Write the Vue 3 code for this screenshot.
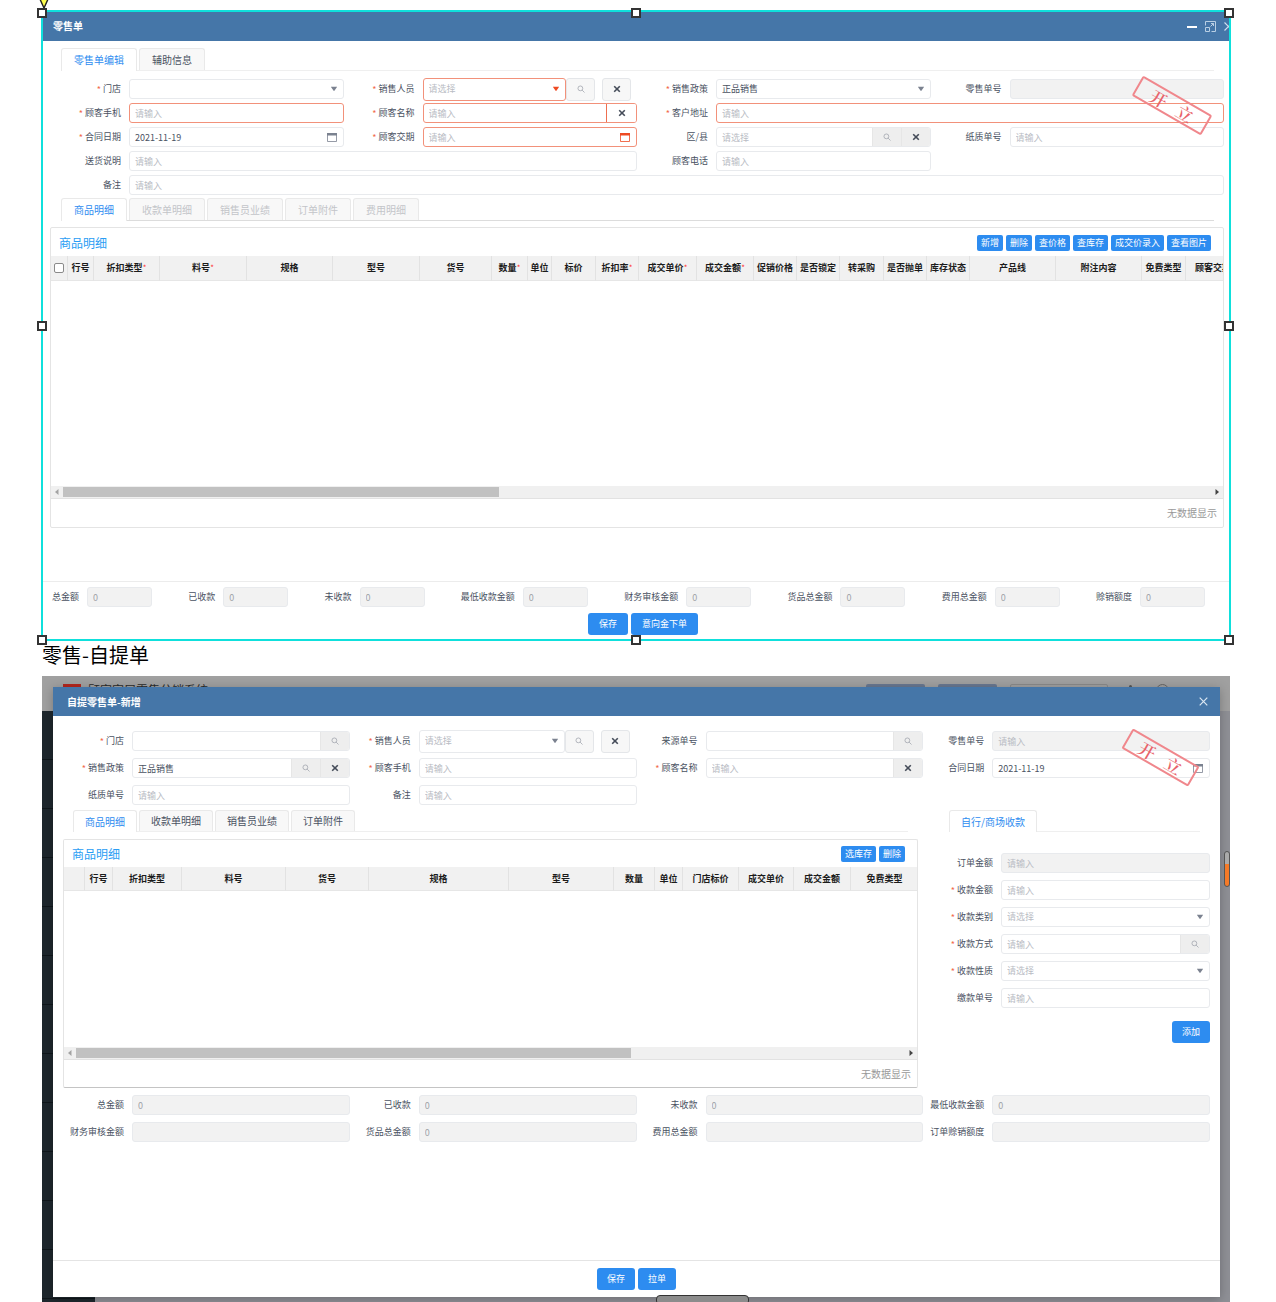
<script setup>
import { h } from 'vue'

const svg = (cls, box, kids) =>
  h('svg', { class: ['ico', cls], viewBox: box, 'aria-hidden': 'true' }, kids)

const icons = {
  search: () => svg('ico-search', '0 0 10 10', [
    h('circle', { cx: 4.2, cy: 4.2, r: 3, fill: 'none', stroke: 'currentColor' }),
    h('path', { d: 'M6.4 6.4 9.4 9.4', fill: 'none', stroke: 'currentColor' }),
  ]),
  clear: () => svg('ico-clear', '0 0 8 8', [
    h('path', { d: 'M1.2 1.2 6.8 6.8M6.8 1.2 1.2 6.8', fill: 'none', stroke: 'currentColor', 'stroke-width': 1.6 }),
  ]),
  caret: () => svg('ico-caret', '0 0 8 6', [
    h('path', { d: 'M0.8 0.8H7.2L4 5.2Z', fill: 'currentColor' }),
  ]),
  date: () => svg('ico-date', '0 0 10 9', [
    h('path', { d: 'M0.5 0.5H9.5V8.5H0.5Z', fill: 'none', stroke: 'currentColor', 'stroke-width': 0.8 }),
    h('path', { d: 'M0 0H10V2.4H0Z', fill: 'currentColor' }),
  ]),
}

const names = { search: '查找', clear: '清除' }
const iconButton = (kind, cls) =>
  h('button', { type: 'button', class: cls, 'aria-label': names[kind] }, [icons[kind]()])

const Field = (p) => {
  const f = p.f
  const control = f.kind === 'select'
    ? h('select', { id: f.id, class: { hint: !f.value } }, [h('option', f.value || f.hint || '')])
    : h('input', { id: f.id, type: 'text', placeholder: f.hint, value: f.value, disabled: f.off })
  const tail = f.kind === 'select' ? icons.caret() : f.kind === 'date' ? icons.date() : null
  const box = h('div', { class: ['box', { err: f.err, off: f.off }] }, [
    control,
    tail,
    ...(f.addons || []).map((k) => iconButton(k, ['addon', { plain: f.err }])),
  ])
  return h('div', { class: ['field', f.span && 'span' + f.span] }, [
    h('label', { for: f.id }, [f.req ? h('span', { class: 'star' }, '*') : null, f.label]),
    f.side ? h('div', { class: 'split' }, [box, iconButton('search', 'square'), iconButton('clear', 'square apart')]) : box,
  ])
}
Field.props = ['f']

const list = (prefix, rows) => rows.map((r, i) => ({ id: prefix + i, ...r }))
const IN = '请输入'
const SEL = '请选择'

const retail = list('retail', [
  { label: '门店', req: true, kind: 'select' },
  { label: '销售人员', req: true, kind: 'select', hint: SEL, err: true, side: true },
  { label: '销售政策', req: true, kind: 'select', value: '正品销售' },
  { label: '零售单号', off: true },
  { label: '顾客手机', req: true, hint: IN, err: true },
  { label: '顾客名称', req: true, hint: IN, err: true, addons: ['clear'] },
  { label: '客户地址', req: true, hint: IN, err: true, span: 2 },
  { label: '合同日期', req: true, kind: 'date', value: '2021-11-19' },
  { label: '顾客交期', req: true, kind: 'date', hint: IN, err: true },
  { label: '区/县', hint: SEL, addons: ['search', 'clear'] },
  { label: '纸质单号', hint: IN },
  { label: '送货说明', hint: IN, span: 2 },
  { label: '顾客电话', hint: IN },
  { label: '备注', hint: IN, span: 4 },
])

const pickup = list('pickup', [
  { label: '门店', req: true, addons: ['search'] },
  { label: '销售人员', req: true, kind: 'select', hint: SEL, side: true },
  { label: '来源单号', addons: ['search'] },
  { label: '零售单号', hint: IN, off: true },
  { label: '销售政策', req: true, value: '正品销售', addons: ['search', 'clear'] },
  { label: '顾客手机', req: true, hint: IN },
  { label: '顾客名称', req: true, hint: IN, addons: ['clear'] },
  { label: '合同日期', kind: 'date', value: '2021-11-19' },
  { label: '纸质单号', hint: IN },
  { label: '备注', hint: IN },
])

const payment = list('pay', [
  { label: '订单金额', hint: IN, off: true },
  { label: '收款金额', req: true, hint: IN },
  { label: '收款类别', req: true, kind: 'select', hint: SEL },
  { label: '收款方式', req: true, hint: IN, addons: ['search'] },
  { label: '收款性质', req: true, kind: 'select', hint: SEL },
  { label: '缴款单号', hint: IN },
])

const retailSums = list('rsum', ['总金额', '已收款', '未收款', '最低收款金额', '财务审核金额', '货品总金额', '费用总金额', '赊销额度']
  .map((label) => ({ label, value: '0', off: true })))

const pickupSums = list('psum', [
  ['总金额', '0'], ['已收款', '0'], ['未收款', '0'], ['最低收款金额', '0'],
  ['财务审核金额', ''], ['货品总金额', '0'], ['费用总金额', ''], ['订单赊销额度', ''],
].map(([label, value]) => ({ label, value, off: true })))

const retailCols = [
  ['行号', 26], ['折扣类型', 66, 1], ['料号', 87, 1], ['规格', 86], ['型号', 87], ['货号', 72],
  ['数量', 36, 1], ['单位', 24], ['标价', 44], ['折扣率', 43, 1], ['成交单价', 58, 1], ['成交金额', 57, 1],
  ['促销价格', 43], ['是否锁定', 43], ['转采购', 44], ['是否抛单', 43], ['库存状态', 43], ['产品线', 86],
  ['附注内容', 86], ['免费类型', 44], ['顾客交期', 54],
]
const retailWidth = retailCols.reduce((sum, c) => sum + c[1], 17)

const pickupCols = [
  ['', 21], ['行号', 28], ['折扣类型', 69], ['料号', 104], ['货号', 83], ['规格', 140], ['型号', 105],
  ['数量', 41], ['单位', 28], ['门店标价', 56], ['成交单价', 55], ['成交金额', 57], ['免费类型', 67],
]

const retailTools = ['新增', '删除', '查价格', '查库存', '成交价录入', '查看图片']
const handles = ['nw', 'n', 'ne', 'w', 'e', 'sw', 's', 'se']
</script>

<template>
  <main class="page">
    <section class="frame">
      <header class="bar">
        <h2>零售单</h2>
        <div class="window-tools">
          <button type="button" aria-label="最小化"><svg width="10" height="12" viewBox="0 0 10 12"><path d="M0 7H10" stroke="#fff" stroke-width="2" /></svg></button>
          <button type="button" aria-label="最大化"><svg width="11" height="11" viewBox="0 0 11 11" fill="none" stroke="#b9cfe4"><path d="M.5 4.5V.5H10.5V10.5H6.5M.5 6.5H4.5V10.5H.5ZM5.5 5.5 8.5 2.5M6 2.5H8.5V5" /></svg></button>
          <button type="button" class="cut" aria-label="关闭"><svg width="9" height="9" viewBox="0 0 9 9"><path d="M.5.5 8.5 8.5M8.5.5.5 8.5" stroke="#cfe0f0" stroke-width="1.2" /></svg></button>
        </div>
      </header>

      <div class="body">
        <nav class="tabs">
          <button type="button" class="tab on">零售单编辑</button>
          <button type="button" class="tab">辅助信息</button>
        </nav>
        <form class="form">
          <Field v-for="f in retail" :key="f.id" :f="f" />
        </form>
        <nav class="tabs second">
          <button type="button" class="tab on">商品明细</button>
          <button v-for="t in ['收款单明细', '销售员业绩', '订单附件', '费用明细']" :key="t" type="button" class="tab" disabled>{{ t }}</button>
        </nav>

        <section class="card">
          <div class="card-head">
            <h3>商品明细</h3>
            <div class="tools">
              <button v-for="t in retailTools" :key="t" type="button" class="mini">{{ t }}</button>
            </div>
          </div>
          <div class="grid">
            <table :style="{ width: retailWidth + 'px' }">
              <colgroup>
                <col style="width: 17px" />
                <col v-for="c in retailCols" :key="c[0]" :style="{ width: c[1] + 'px' }" />
              </colgroup>
              <thead>
                <tr>
                  <th><input type="checkbox" aria-label="全选" /></th>
                  <th v-for="c in retailCols" :key="c[0]">{{ c[0] }}<sup v-if="c[2]">*</sup></th>
                </tr>
              </thead>
            </table>
          </div>
          <div class="scroll">
            <svg width="4" height="6" viewBox="0 0 4 6"><path d="M3.5 0V6L0 3Z" fill="#a3a3a3" /></svg>
            <div class="track"><div class="thumb"></div></div>
            <svg width="4" height="6" viewBox="0 0 4 6"><path d="M.5 0V6L4 3Z" fill="#444" /></svg>
          </div>
          <div class="empty">无数据显示</div>
        </section>
      </div>

      <footer class="foot">
        <div class="sums">
          <Field v-for="f in retailSums" :key="f.id" :f="f" />
        </div>
        <div class="actions">
          <button type="button" class="primary">保存</button>
          <button type="button" class="primary">意向金下单</button>
        </div>
      </footer>

      <div class="stamp"><span>开</span><span>立</span></div>
      <svg class="anchor" width="14" height="10" viewBox="0 0 14 10"><path d="M2-3 7 8 12-3" fill="#ffff4d" stroke="#222" stroke-width="1.4" /></svg>
      <i v-for="k in handles" :key="k" class="handle" :class="k"></i>
    </section>

    <h1>零售-自提单</h1>

    <section class="shell">
      <div class="backdrop">
        <div class="top">
          <i class="logo"></i><span class="brand">顾家家居零售分销系统</span>
          <i class="chip"></i><i class="chip"></i><i class="find"></i><i class="bell"></i><i class="face"></i>
        </div>
        <div class="side"></div>
      </div>

      <div class="modal">
        <header class="bar">
          <h2>自提零售单-新增</h2>
          <button type="button" aria-label="关闭"><svg width="9" height="9" viewBox="0 0 9 9"><path d="M.7.7 8.3 8.3M8.3.7.7 8.3" stroke="#dbe7f2" stroke-width="1.2" /></svg></button>
        </header>
        <div class="modal-body">
          <form class="form">
            <Field v-for="f in pickup" :key="f.id" :f="f" />
          </form>
          <div class="columns">
            <div>
              <nav class="tabs">
                <button type="button" class="tab on">商品明细</button>
                <button v-for="t in ['收款单明细', '销售员业绩', '订单附件']" :key="t" type="button" class="tab">{{ t }}</button>
              </nav>
              <section class="card">
                <div class="card-head">
                  <h3>商品明细</h3>
                  <div class="tools">
                    <button type="button" class="mini">选库存</button>
                    <button type="button" class="mini">删除</button>
                  </div>
                </div>
                <div class="grid">
                  <table>
                    <colgroup>
                      <col v-for="c in pickupCols" :key="c[0]" :style="{ width: c[1] + 'px' }" />
                    </colgroup>
                    <thead>
                      <tr><th v-for="c in pickupCols" :key="c[0]">{{ c[0] }}</th></tr>
                    </thead>
                  </table>
                </div>
                <div class="scroll">
                  <svg width="4" height="6" viewBox="0 0 4 6"><path d="M3.5 0V6L0 3Z" fill="#a3a3a3" /></svg>
                  <div class="track"><div class="thumb wide"></div></div>
                  <svg width="4" height="6" viewBox="0 0 4 6"><path d="M.5 0V6L4 3Z" fill="#444" /></svg>
                </div>
                <div class="empty">无数据显示</div>
              </section>
            </div>
            <div class="pay">
              <nav class="tabs"><button type="button" class="tab on">自行/商场收款</button></nav>
              <form class="pay-form">
                <Field v-for="f in payment" :key="f.id" :f="f" />
                <button type="button" class="primary">添加</button>
              </form>
            </div>
          </div>
          <div class="form totals">
            <Field v-for="f in pickupSums" :key="f.id" :f="f" />
          </div>
        </div>
        <footer class="modal-foot">
          <button type="button" class="primary">保存</button>
          <button type="button" class="primary">拉单</button>
        </footer>
        <div class="stamp"><span>开</span><span>立</span></div>
      </div>

      <i class="meter"></i>
      <i class="dock"></i>
    </section>
  </main>
</template>

<style>
body {
  margin: 0;
  background: #fff;
}
</style>

<style scoped>
.page {
  box-sizing: border-box;
  padding: 10px 45px 0 41px;
  font: 9px/12px "Noto Sans CJK SC", "Noto Sans", sans-serif;
  color: #4a5262;
  overflow: hidden;
}
.page *,
.page :deep(*) {
  box-sizing: border-box;
}
:deep(button),
:deep(input),
:deep(select) {
  margin: 0;
  font: inherit;
}
h1, h2, h3 {
  margin: 0;
}
h1 {
  margin-left: 1px;
  font-size: 20px;
  line-height: 28px;
  font-weight: 400;
  color: #000;
}
.frame {
  position: relative;
  border: 2px solid #0fe0dc;
}
.bar {
  display: flex;
  align-items: center;
  justify-content: space-between;
  height: 29px;
  padding: 0 12px 0 10px;
  background: #4576a8;
  color: #fff;
}
.bar h2 {
  font-size: 10px;
  line-height: 14px;
  font-weight: 700;
}
.bar button {
  display: flex;
  padding: 0;
  border: 0;
  background: none;
}
.bar svg {
  flex: none;
}
.frame .bar {
  padding: 0 0 1px 10px;
}
.window-tools {
  display: flex;
  align-items: center;
  gap: 8px;
}
.window-tools .cut {
  width: 5px;
  overflow: hidden;
}
.body {
  padding: 7px 5px 53px 7px;
}

/* tabs */
.page .tabs {
  display: flex;
  gap: 2px;
  height: 23px;
  margin: 0 10px 0 11px;
  border-bottom: 1px solid #efefef;
}
.page .tab {
  height: 22px;
  padding: 0 11px;
  border: 1px solid #e9e9e9;
  border-bottom: 0;
  border-radius: 3px 3px 0 0;
  background: #f8f8f8;
  color: #4a5262;
  font-size: 10px;
  line-height: 20px;
  white-space: nowrap;
}
.frame .tabs .tab {
  padding: 0 12px;
}
.page .tab.on {
  height: 23px;
  background: #fff;
  color: #2d8cf0;
}
.page .tab:disabled {
  color: #c3c5c9;
}
.page .tabs.second {
  margin-top: 3px;
  border-bottom-color: #dcdcdc;
}
.page .tabs.second + .card {
  margin-top: 6px;
}

/* fields */
.form {
  display: grid;
  grid-template-columns: repeat(4, minmax(0, 1fr));
  grid-auto-rows: 20px;
  row-gap: 4px;
  margin-top: 8px;
}
.page :deep(.field) {
  display: flex;
  align-items: center;
  min-width: 0;
}
.page :deep(.field label) {
  flex: none;
  display: flex;
  justify-content: flex-end;
  width: 71px;
  margin-right: 8px;
  white-space: nowrap;
}
.page :deep(.star) {
  margin-right: 2px;
  padding-top: 2px;
  line-height: 10px;
  color: #f26a4b;
}
.page :deep(.span2) {
  grid-column: span 2;
}
.page :deep(.span4) {
  grid-column: span 4;
}
.page :deep(.box) {
  flex: 1;
  display: flex;
  align-items: center;
  min-width: 0;
  height: 20px;
  border: 1px solid #e8eaed;
  border-radius: 3px;
  background: #fff;
  overflow: hidden;
}
.page :deep(.box input),
.page :deep(.box select) {
  flex: 1;
  width: 0;
  min-width: 0;
  height: 18px;
  padding: 0 5px;
  border: 0;
  outline: 0;
  background: transparent;
  color: #4a5262;
  appearance: none;
  opacity: 1;
}
.page :deep(.box input::placeholder),
.page :deep(.box select.hint) {
  color: #b9bcc4;
  opacity: 1;
}
.page :deep(.box.off) {
  background: #f2f2f2;
}
.page :deep(.box.off input) {
  color: #a0a3a8;
}
.page :deep(.box.err) {
  border-color: #f2917a;
}
.page :deep(.ico) {
  flex: none;
  display: block;
  color: #7b8290;
}
.page :deep(.ico-caret) {
  width: 8px;
  height: 6px;
  margin-right: 5px;
}
.page :deep(.ico-date) {
  width: 10px;
  height: 9px;
  margin-right: 6px;
}
.page :deep(.err > .ico) {
  color: #ee4a22;
}
.page :deep(.ico-search) {
  width: 8px;
  height: 8px;
  color: #a2a6ae;
}
.page :deep(.ico-clear) {
  width: 8px;
  height: 8px;
  color: #444b58;
}
.page :deep(.addon),
.page :deep(.square) {
  flex: none;
  display: flex;
  align-items: center;
  justify-content: center;
  padding: 0;
  width: 29px;
}
.page :deep(.addon) {
  height: 20px;
  border: 0;
  border-left: 1px solid #e6e6e6;
  background: #eee;
}
.page :deep(.addon.plain) {
  width: 30px;
  border-left-color: #ee6f50;
  background: #fff;
}
.page :deep(.split) {
  flex: 1;
  display: flex;
  padding-right: 6px;
  min-width: 0;
}
.page :deep(.split .box),
.page :deep(.square) {
  height: 23px;
}
.page :deep(.square) {
  border: 1px solid #e4e6e9;
  border-radius: 3px;
  background: #f7f7f7;
}
.page :deep(.square.apart) {
  margin-left: 7px;
}

/* table card */
.card {
  border: 1px solid #e4e4e4;
  border-radius: 2px;
}
.card-head {
  display: flex;
  align-items: center;
  justify-content: space-between;
  height: 28px;
  padding: 1px 12px 0 8px;
}
.card-head h3 {
  font-size: 12px;
  line-height: 16px;
  font-weight: 400;
  color: #2a9df4;
}
.tools {
  display: flex;
  gap: 3px;
}
.page .mini,
.page .primary {
  border: 0;
  border-radius: 2px;
  background: #2d8cf0;
  color: #fff;
  white-space: nowrap;
}
.page .mini {
  height: 16px;
  padding: 0 4px;
}
.page .primary {
  height: 22px;
  padding: 0 11px;
  border-radius: 3px;
}
.grid {
  min-height: 230px;
  overflow: hidden;
}
table {
  table-layout: fixed;
  width: 100%;
  border-collapse: separate;
  border-spacing: 0;
}
th {
  height: 25px;
  padding: 0;
  border-right: 1px solid #e2e2e2;
  border-bottom: 1px solid #e6e6e6;
  background: #f1f1f1;
  color: #1c1c1c;
  font-weight: 700;
  white-space: nowrap;
}
th:last-child {
  border-right: 0;
}
.page th input {
  display: block;
  appearance: none;
  width: 10px;
  height: 10px;
  margin: 0 auto;
  border: 1px solid #8a8a8a;
  border-radius: 2px;
  background: #fff;
}
th sup {
  font-size: 8px;
  line-height: 0;
  font-weight: 400;
  vertical-align: baseline;
  color: #f33;
}
.scroll {
  display: flex;
  align-items: center;
  gap: 4px;
  height: 12px;
  padding: 0 4px;
  background: #f0f0f0;
}
.track {
  flex: 1;
}
.thumb {
  width: 38%;
  height: 10px;
  background: #c1c1c1;
}
.thumb.wide {
  width: 67%;
}
.empty {
  height: 29px;
  padding-right: 6px;
  border-top: 1px solid #e2e2e2;
  font-size: 10px;
  line-height: 28px;
  text-align: right;
  color: #999;
}

/* frame footer */
.foot {
  padding: 5px 24px 4px 9px;
  border-top: 1px solid #ececec;
}
.sums {
  display: flex;
  justify-content: space-between;
}
.sums :deep(.field label) {
  width: auto;
}
.sums :deep(.box) {
  flex: none;
  width: 65px;
}
.actions {
  display: flex;
  justify-content: center;
  gap: 3px;
  padding: 6px 0 0 29px;
}

/* overlays */
.stamp {
  position: absolute;
  top: 82px;
  right: 17px;
  display: flex;
  align-items: center;
  justify-content: center;
  gap: 13px;
  width: 80px;
  height: 23px;
  border: 2px solid #f0878c;
  border-radius: 2px;
  font: 600 17px/20px "Noto Serif CJK SC", "Noto Sans CJK SC", serif;
  color: #e8636b;
  transform: rotate(30deg);
}
.anchor {
  position: absolute;
  top: -12px;
  left: -6px;
}
.handle {
  position: absolute;
  width: 10px;
  height: 10px;
  border: 2px solid #333;
  background: #fff;
}
.nw, .n, .ne { top: -4px; }
.w, .e { top: 309px; }
.sw, .s, .se { bottom: -6px; }
.nw, .w, .sw { left: -6px; }
.n, .s { left: calc(50% - 5px); }
.ne, .e, .se { right: -5px; }

/* second screen */
.shell {
  position: relative;
  display: grid;
  margin: 7px 1px 0;
  background: #8f9096;
  overflow: hidden;
}
.backdrop,
.modal {
  grid-area: 1 / 1;
}
.backdrop {
  display: flex;
  flex-direction: column;
}
.top {
  display: flex;
  align-items: flex-start;
  height: 35px;
  padding: 8px 61px 0 21px;
  background: #a0a0a0;
}
.logo {
  width: 18px;
  height: 12px;
  background: #b3271e;
}
.brand {
  margin: -2px auto 0 7px;
  font-size: 12px;
  line-height: 16px;
  color: #2b2b2b;
}
.chip {
  width: 59px;
  height: 14px;
  margin-right: 13px;
  border-radius: 2px;
  background: #697891;
}
.find {
  width: 98px;
  height: 14px;
  border: 1px solid #8a8a8a;
  border-radius: 2px;
}
.bell {
  width: 3px;
  height: 3px;
  margin: 1px 24px 0 21px;
  border-radius: 2px;
  background: #555;
}
.face {
  width: 13px;
  height: 13px;
  border: 1px solid #666;
  border-radius: 50%;
}
.side {
  flex: 1;
  width: 53px;
  background: repeating-linear-gradient(#1e272d 0 48px, #10171b 48px 49px);
}
.modal {
  position: relative;
  margin: 11px 10px 5px 11px;
  background: #fff;
  box-shadow: 0 2px 10px rgba(0, 0, 0, 0.25);
}
.modal .bar {
  padding-left: 14px;
}
.modal-body {
  padding: 15px 10px 118px;
}
.modal .form {
  row-gap: 7px;
  margin: 0;
}
.modal .form :deep(.field label) {
  width: 61px;
}
.modal .form :deep(.split) {
  padding-right: 7px;
}
.columns {
  display: grid;
  grid-template-columns: minmax(0, 1fr) 261px;
  column-gap: 31px;
  margin-top: 5px;
}
.modal .tabs {
  height: 22px;
  margin: 0 10px;
}
.modal .tabs .tab {
  height: 21px;
}
.modal .tabs .tab.on {
  height: 22px;
}
.modal .card {
  margin-top: 7px;
  border-bottom-color: #c4c4c4;
}
.modal .card-head {
  height: 27px;
}
.modal .grid {
  min-height: 180px;
}
.modal th {
  height: 24px;
}
.modal .empty {
  height: 28px;
}
.pay .tabs {
  margin-left: 0;
}
.pay-form {
  display: flex;
  flex-direction: column;
  gap: 7px;
  margin-top: 21px;
}
.pay-form :deep(.field label) {
  width: 44px;
}
.modal .primary {
  padding: 0 10px;
}
.pay-form .primary {
  align-self: flex-end;
  margin-top: 6px;
}
.modal .totals {
  margin-top: 7px;
}
.modal-foot {
  display: flex;
  justify-content: center;
  gap: 3px;
  padding: 7px 0;
  border-top: 1px solid #e4e4e4;
}
.modal .stamp {
  top: 59px;
  right: 21px;
  width: 77px;
}
.meter {
  position: absolute;
  top: 175px;
  right: 0;
  width: 6px;
  height: 36px;
  border: 1px solid #555;
  border-radius: 3px;
  background: linear-gradient(#aaa 0 12px, #f57a28 12px);
}
.dock {
  position: absolute;
  bottom: -3px;
  left: calc(50% + 20px);
  width: 93px;
  height: 10px;
  border: 1px solid #333;
  border-radius: 4px;
  background: #8c8c8c;
}
</style>
